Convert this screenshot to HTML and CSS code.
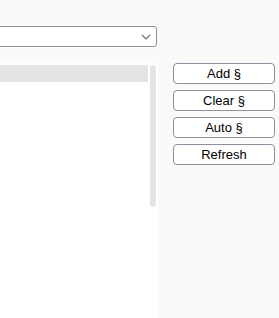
FILE: index.html
```html
<!DOCTYPE html>
<html>
<head>
    <meta charset="utf-8" />
    <title>Sections</title>
    <link rel="stylesheet" href="styles.css">
</head>
<body>
<div class="app">
    <div class="main">
        <div class="picker">
            <span class="picker-value"></span>
            <svg class="chevron" width="10" height="6" viewBox="0 0 10 6"><path d="M1 1 L5 5 L9 1" fill="none" stroke="#6a6a72" stroke-width="1.1"/></svg>
        </div>
        <div class="list">
            <div class="rows">
                <div class="row selected"></div>
            </div>
            <div class="scrollbar"></div>
        </div>
    </div>
    <div class="actions">
        <button>Add §</button>
        <button>Clear §</button>
        <button>Auto §</button>
        <button>Refresh</button>
    </div>
</div>
</body>
</html>
```

FILE: styles.css
```css
html, body {
    margin: 0;
    height: 100%;
}
body {
    background-color: #fafafa;
    font-family: 'Liberation Sans', Arial, sans-serif;
    overflow: hidden;
}
.app {
    display: flex;
    height: 100%;
}
.main {
    width: 158px;
    display: flex;
    flex-direction: column;
    padding-top: 26px;
    box-sizing: border-box;
}
.picker {
    height: 21px;
    box-sizing: border-box;
    margin: 0 1px 16px -10px;
    border: 1px solid #8f8f9d;
    border-radius: 3px;
    background: #fff;
    display: flex;
    align-items: center;
    justify-content: flex-end;
    padding-right: 5px;
}
.list {
    flex: 1;
    background: #fff;
    display: flex;
    gap: 2px;
    padding: 2px 2px 0 0;
}
.rows {
    width: 148px;
}
.row {
    height: 17px;
}
.row.selected {
    background: #e4e4e4;
}
.scrollbar {
    width: 6px;
    height: 142px;
    border-radius: 3px;
    background: #e4e4e4;
}
.actions {
    width: 102px;
    margin-left: 15px;
    padding-top: 63px;
    display: flex;
    flex-direction: column;
    gap: 6px;
}
.actions button {
    height: 21px;
    padding: 0;
    border: 1px solid #8f8f9d;
    border-radius: 4px;
    background: #fff;
    color: #000;
    font-family: 'Liberation Sans', Arial, sans-serif;
    font-size: 13px;
}
```
